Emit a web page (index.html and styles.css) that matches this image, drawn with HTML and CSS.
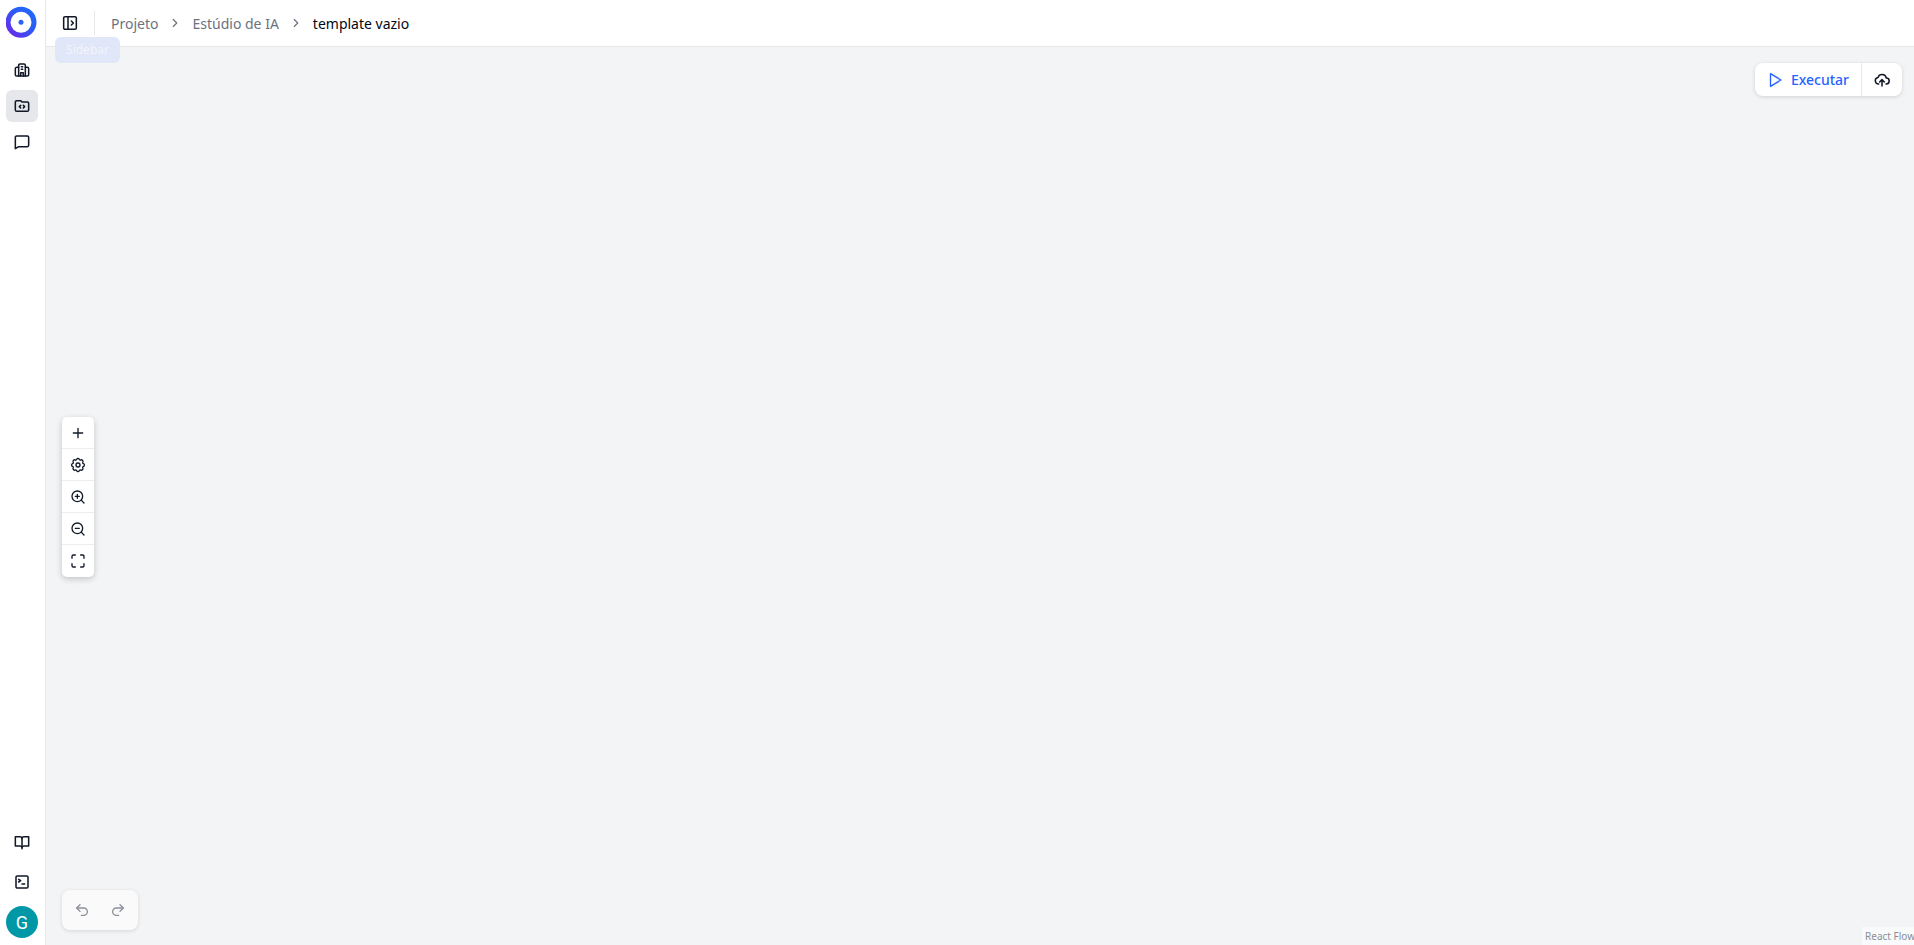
FILE: index.html
```html
<!DOCTYPE html>
<html lang="pt">
<head>
  <meta charset="UTF-8">
  <meta name="viewport" content="width=device-width, initial-scale=1.0">
  <title>template vazio</title>
  <link rel="stylesheet" href="styles.css">
</head>
<body>
  <div class="app">
    <!-- Left nav -->
    <aside class="sidebar">
      <svg class="logo" width="32" height="32" viewBox="0 0 32 32">
        <defs>
          <linearGradient id="logo-grad" x1="0" y1="1" x2="1" y2="0">
            <stop offset="0" stop-color="#6d28e8"/>
            <stop offset="0.6" stop-color="#2a5cf5"/>
            <stop offset="1" stop-color="#1f6bff"/>
          </linearGradient>
        </defs>
        <circle cx="15" cy="16.300" r="13" fill="none" stroke="url(#logo-grad)" stroke-width="5"/>
        <circle cx="15" cy="16.300" r="2.500" fill="#2b63f0"/>
      </svg>
      <nav class="nav-top">
        <button class="nav-btn">
          <svg class="icon nav-icon" viewBox="0 0 24 24"><path d="M7 21V5a2 2 0 0 1 2-2h6a2 2 0 0 1 2 2v16"/><path d="M7 8H4a2 2 0 0 0-2 2v9a2 2 0 0 0 2 2h16a2 2 0 0 0 2-2v-9a2 2 0 0 0-2-2h-3"/><path d="M11 7h2M11 11h2M10 21v-5h4v5"/></svg>
        </button>
        <button class="nav-btn active">
          <svg class="icon nav-icon" viewBox="0 0 24 24"><path d="M4 20h16a2 2 0 0 0 2-2V8a2 2 0 0 0-2-2h-8L10 4H4a2 2 0 0 0-2 2v12a2 2 0 0 0 2 2Z"/><path d="m10 11-2 2 2 2M14 11l2 2-2 2"/></svg>
        </button>
        <button class="nav-btn">
          <svg class="icon nav-icon" viewBox="0 0 24 24"><path d="M4 3h16a2 2 0 0 1 2 2v12a2 2 0 0 1-2 2H7l-5 3V5a2 2 0 0 1 2-2Z"/></svg>
        </button>
      </nav>
      <nav class="nav-bottom">
        <button class="nav-btn">
          <svg class="icon nav-icon" viewBox="0 0 24 24"><path d="M12 7v15"/><path d="M2 18V4h7a3 3 0 0 1 3 3 3 3 0 0 1 3-3h7v14h-7a3 3 0 0 0-3 2 3 3 0 0 0-3-2Z"/></svg>
        </button>
        <button class="nav-btn">
          <svg class="icon nav-icon" viewBox="0 0 24 24"><rect x="3" y="3" width="18" height="18" rx="2"/><path d="m7 8 3 2-3 2M12 15h4"/></svg>
        </button>
        <div class="avatar">G</div>
      </nav>
    </aside>

    <main class="main">
      <header class="topbar">
        <button class="sidebar-toggle">
          <svg class="icon nav-icon" viewBox="0 0 24 24"><rect x="2.500" y="2.500" width="19" height="19" rx="2"/><path d="M9 3v18M14 9l3 3-3 3"/></svg>
        </button>
        <div class="crumbs">
          <span class="crumb">Projeto</span>
          <svg class="chevron" viewBox="0 0 24 24"><path d="m9 6 6 6-6 6"/></svg>
          <span class="crumb">Estúdio de IA</span>
          <svg class="chevron" viewBox="0 0 24 24"><path d="m9 6 6 6-6 6"/></svg>
          <span class="crumb current">template vazio</span>
        </div>
      </header>

      <!-- Flow canvas -->
      <section class="canvas">
        <div class="run-panel">
          <button class="run-btn">
            <svg class="icon run-icon" viewBox="0 0 24 24"><path d="M6 3.500v17l14-8.500Z"/></svg>
            Executar
          </button>
          <button class="publish-btn">
            <svg class="icon nav-icon" viewBox="0 0 24 24"><path d="M12 21v-9M8.500 15 12 11.500l3.500 3.500"/><path d="M7 18a5 5 0 0 1-1-9.900A6.500 6.500 0 0 1 18.500 9 4.500 4.500 0 0 1 18 18"/></svg>
          </button>
        </div>

        <div class="controls">
          <button class="control">
            <svg class="icon" viewBox="0 0 24 24"><path d="M12 5v14M5 12h14"/></svg>
          </button>
          <button class="control">
            <svg class="icon" viewBox="0 0 24 24"><path d="M10.300 3.300c.4-1.700 3-1.700 3.400 0a1.700 1.700 0 0 0 2.600 1c1.500-.9 3.900 1.500 3 3a1.700 1.700 0 0 0 1 2.600c1.700.4 1.700 3.800 0 4.200a1.700 1.700 0 0 0-1 2.600c.9 1.500-1.500 3.900-3 3a1.700 1.700 0 0 0-2.600 1c-.4 1.700-3 1.700-3.400 0a1.700 1.700 0 0 0-2.600-1c-1.500.9-3.900-1.500-3-3a1.700 1.700 0 0 0-1-2.600c-1.700-.4-1.700-3.800 0-4.200a1.700 1.700 0 0 0 1-2.600c-.9-1.500 1.500-3.900 3-3a1.700 1.700 0 0 0 2.600-1Z"/><circle cx="12" cy="12" r="3"/></svg>
          </button>
          <button class="control">
            <svg class="icon" viewBox="0 0 24 24"><circle cx="11" cy="11" r="8"/><path d="m21 21-4.300-4.300M11 8v6M8 11h6"/></svg>
          </button>
          <button class="control">
            <svg class="icon" viewBox="0 0 24 24"><circle cx="11" cy="11" r="8"/><path d="m21 21-4.300-4.300M8 11h6"/></svg>
          </button>
          <button class="control">
            <svg class="icon" viewBox="0 0 24 24"><path d="M3 8V5a2 2 0 0 1 2-2h3M16 3h3a2 2 0 0 1 2 2v3M21 16v3a2 2 0 0 1-2 2h-3M8 21H5a2 2 0 0 1-2-2v-3"/></svg>
          </button>
        </div>

        <div class="history">
          <button class="history-btn">
            <svg class="icon" viewBox="0 0 24 24"><path d="M9 14 4 9l5-5"/><path d="M4 9h10.500a5.500 5.500 0 0 1 0 11H11"/></svg>
          </button>
          <button class="history-btn">
            <svg class="icon" viewBox="0 0 24 24"><path d="m15 14 5-5-5-5"/><path d="M20 9H9.500a5.500 5.500 0 0 0 0 11H13"/></svg>
          </button>
        </div>

        <div class="attribution">React Flow</div>
      </section>
    </main>
  </div>

  <div class="tooltip">Sidebar</div>
</body>
</html>
```

FILE: styles.css
```css
* {
  box-sizing: border-box;
  margin: 0;
  padding: 0;
}

html, body {
  height: 100%;
  overflow: hidden;
}

body {
  font-family: "Noto Sans", Arial, sans-serif;
  background-color: #fff;
  color: #030712;
}

button {
  display: flex;
  align-items: center;
  justify-content: center;
  border: none;
  background: none;
  font: inherit;
  color: inherit;
  cursor: pointer;
}

.app {
  display: flex;
  height: 100%;
}

.icon {
  width: 16px;
  height: 16px;
  fill: none;
  stroke: #111827;
  stroke-width: 2;
  stroke-linecap: round;
  stroke-linejoin: round;
}

.nav-icon {
  stroke-width: 2.300;
}

/* Left nav */
.sidebar {
  display: flex;
  flex-direction: column;
  align-items: flex-start;
  width: 46px;
  flex-shrink: 0;
  padding: 6px 0 7px 6px;
  border-right: 1px solid #e5e7eb;
}

.logo {
  display: block;
}

.nav-top {
  display: flex;
  flex-direction: column;
  gap: 4px;
  margin-top: 16px;
}

.nav-bottom {
  display: flex;
  flex-direction: column;
  align-items: center;
  gap: 8px;
  margin-top: auto;
}

.nav-btn {
  width: 32px;
  height: 32px;
  border-radius: 6px;
}

.nav-btn.active {
  background-color: #e5e7eb;
}

.avatar {
  display: flex;
  align-items: center;
  justify-content: center;
  width: 32px;
  height: 32px;
  border-radius: 50%;
  background-color: #0097a7;
  color: #fff;
  font-family: Roboto, Arial, sans-serif;
  font-size: 18px;
}

.main {
  display: flex;
  flex-direction: column;
  flex: 1;
  min-width: 0;
}

/* Top bar */
.topbar {
  display: flex;
  align-items: center;
  height: 47px;
  flex-shrink: 0;
  padding-left: 8px;
  border-bottom: 1px solid #e5e7eb;
}

.sidebar-toggle {
  width: 32px;
  height: 32px;
}

.crumbs {
  display: flex;
  align-items: center;
  height: 24px;
  margin-left: 8px;
  padding-left: 16px;
  border-left: 1px solid #e5e7eb;
  font-size: 14px;
}

.crumb {
  color: #6b7280;
}

.crumb.current {
  color: #030712;
}

.chevron {
  width: 14px;
  height: 14px;
  margin: 0 10px;
  fill: none;
  stroke: #6b7280;
  stroke-width: 2;
  stroke-linecap: round;
  stroke-linejoin: round;
}

/* Flow canvas */
.canvas {
  position: relative;
  flex: 1;
  background-color: #f3f4f6;
  overflow: hidden;
}

.run-panel {
  position: absolute;
  top: 16px;
  right: 12px;
  display: flex;
  height: 33px;
  background-color: #fff;
  border-radius: 8px;
  box-shadow: 0 1px 4px rgba(0, 0, 0, 0.14);
}

.run-btn {
  gap: 7px;
  width: 107px;
  padding-right: 1px;
  border-right: 1px solid #e5e7eb;
  color: #2563ff;
  font-size: 14px;
  font-weight: 500;
}

.run-icon {
  width: 18px;
  height: 18px;
  stroke: #2563ff;
  stroke-width: 1.800;
}

.publish-btn {
  width: 40px;
}

.controls {
  position: absolute;
  top: 370px;
  left: 16px;
  display: flex;
  flex-direction: column;
  width: 32px;
  background-color: #fff;
  border-radius: 5px;
  box-shadow: 0 2px 6px rgba(0, 0, 0, 0.2);
}

.control {
  width: 32px;
  height: 32px;
  border-bottom: 1px solid #eee;
}

.control:last-child {
  border-bottom: none;
}

.history {
  position: absolute;
  top: 843px;
  left: 16px;
  display: flex;
  align-items: center;
  justify-content: center;
  gap: 4px;
  width: 76px;
  height: 40px;
  background-color: #fafafa;
  border-radius: 8px;
  box-shadow: 0 1px 4px rgba(0, 0, 0, 0.12);
}

.history-btn {
  width: 32px;
  height: 32px;
}

.history-btn .icon {
  stroke: #8b909a;
}

.attribution {
  position: absolute;
  right: -1px;
  bottom: 0;
  padding: 3px 0 2px 3px;
  background-color: rgba(255, 255, 255, 0.5);
  color: #8a8f98;
  font-size: 10px;
  line-height: 13px;
}

.tooltip {
  position: absolute;
  top: 37px;
  left: 55px;
  width: 65px;
  height: 26px;
  border-radius: 6px;
  background-color: #e0e7f8;
  color: #f2f4fb;
  font-size: 12px;
  line-height: 26px;
  text-align: center;
}
```
